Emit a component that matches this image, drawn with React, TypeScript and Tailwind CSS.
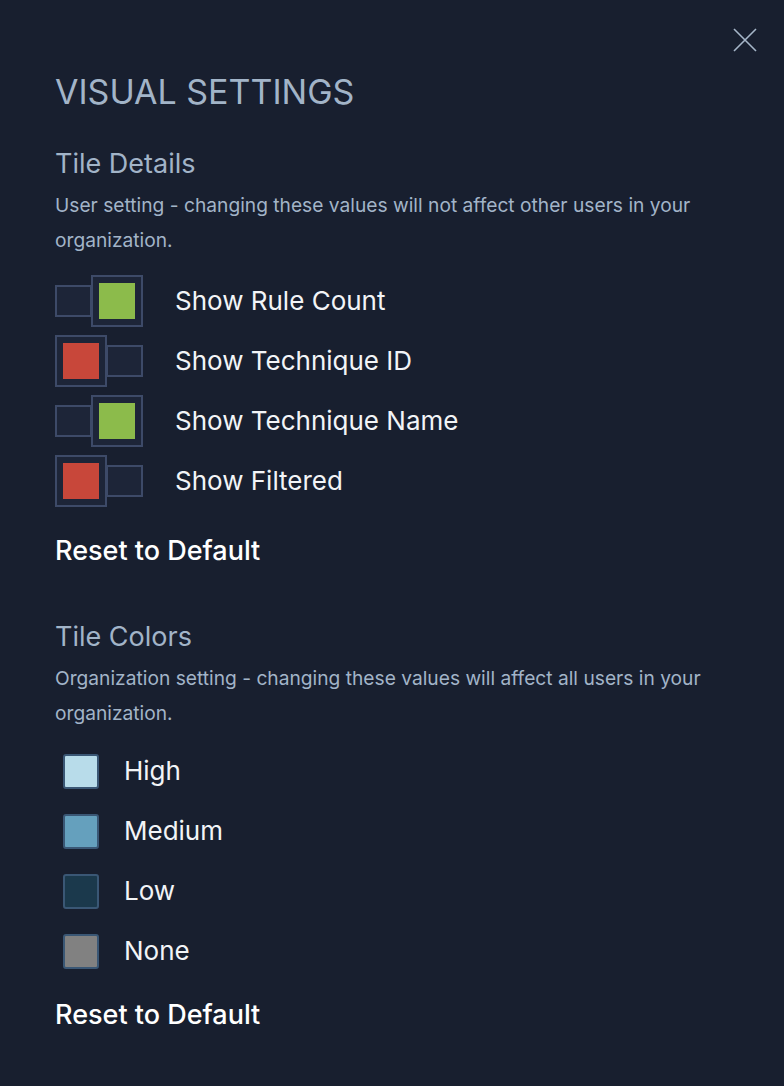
import React from "react";

const toggles: { label: string; on: boolean }[] = [
    { label: "Show Rule Count", on: true },
    { label: "Show Technique ID", on: false },
    { label: "Show Technique Name", on: true },
    { label: "Show Filtered", on: false },
];

const colors: { label: string; swatch: string }[] = [
    { label: "High", swatch: "bg-[#b8dcea]" },
    { label: "Medium", swatch: "bg-[#65a0bd]" },
    { label: "Low", swatch: "bg-[#1b394c]" },
    { label: "None", swatch: "bg-[#818181]" },
];

const Toggle: React.FC<{ on: boolean }> = ({ on }) => {
    const small = <div className="w-[37px] h-[32px] border-2 border-[#3d4a68] bg-[#1d2538]" />;
    const big = (
        <div className="w-[52px] h-[52px] border-2 border-[#3d4a68] bg-[#1d2538] p-[6px]">
            <div className={on ? "w-full h-full bg-[#8cbb4b]" : "w-full h-full bg-[#c8473a]"} />
        </div>
    );
    return (
        <div className="flex items-center w-[88px] shrink-0">
            {on ? (
                <>
                    {small}
                    <div className="-ml-[1px]">{big}</div>
                </>
            ) : (
                <>
                    {big}
                    <div className="-ml-[1px]">{small}</div>
                </>
            )}
        </div>
    );
};

export default function App() {
    return (
        <div
            className="relative w-[784px] h-[1086px] bg-[#181f2f] pl-[55px] pt-[74px] overflow-hidden"
            style={{ fontFamily: "Inter, 'Liberation Sans', sans-serif" }}
        >
            <button className="absolute top-[28px] left-[733px] w-[24px] h-[24px]">
                <svg viewBox="0 0 24 24" width="24" height="24" stroke="#a6b6c9" strokeWidth="1.6" fill="none">
                    <path d="M1 1 L23 23 M23 1 L1 23" />
                </svg>
            </button>

            <h1 className="text-[34px] leading-[36px] text-[#a2b4c8]">VISUAL SETTINGS</h1>

            <h2 className="mt-[38px] text-[27px] leading-[32px] text-[#a2b4c8]">Tile Details</h2>
            <p className="mt-[8px] w-[660px] text-[19.2px] leading-[35px] text-[#a2b4c8]">
                User setting - changing these values will not affect other users in your organization.
            </p>

            <div className="mt-[17px] flex flex-col gap-[8px]">
                {toggles.map((t) => (
                    <div key={t.label} className="flex items-center h-[52px]">
                        <Toggle on={t.on} />
                        <span className="ml-[32px] text-[26px] leading-[52px] text-[#f2f4f7]">{t.label}</span>
                    </div>
                ))}
            </div>

            <div className="mt-[29px] text-[27px] leading-[30px] font-medium text-white">Reset to Default</div>

            <h2 className="mt-[55px] text-[27px] leading-[32px] text-[#a2b4c8]">Tile Colors</h2>
            <p className="mt-[8px] w-[670px] text-[19.2px] leading-[35px] text-[#a2b4c8]">
                Organization setting - changing these values will affect all users in your organization.
            </p>

            <div className="mt-[22px] flex flex-col gap-[24px]">
                {colors.map((c) => (
                    <div key={c.label} className="flex items-center h-[36px]">
                        <div className={`ml-[8px] w-[36px] h-[35px] rounded-[3px] border-2 border-[#3a5775] ${c.swatch}`} />
                        <span className="ml-[25px] text-[26px] leading-[36px] text-[#f2f4f7]">{c.label}</span>
                    </div>
                ))}
            </div>

            <div className="mt-[31px] text-[27px] leading-[30px] font-medium text-white">Reset to Default</div>
        </div>
    );
}
